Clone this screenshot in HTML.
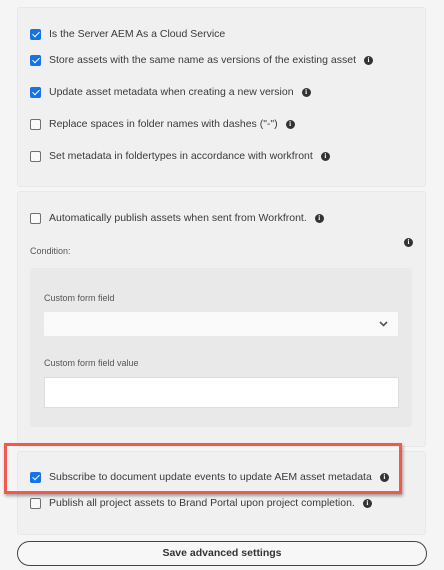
<!DOCTYPE html>
<html><head><meta charset="utf-8"><style>
*{box-sizing:border-box;margin:0;padding:0}
body{width:444px;height:570px;background:#f5f5f5;font-family:"Liberation Sans",sans-serif;color:#3a3a3a;position:relative;overflow:hidden}
.p{position:absolute;left:17px;width:409px;background:#f0f0f0;border:1px solid #e8e8e8;border-radius:3px}
.row{position:absolute;left:30px;font-size:10.5px;white-space:nowrap;display:flex;align-items:center;height:14px}
.cb{width:11px;height:11px;border:1.5px solid #707070;border-radius:2px;background:#fafafa;margin-right:8px;flex:none}
.cb.on{background:#1473e6;border-color:#1473e6;position:relative}
.cb.on:after{content:"";position:absolute;left:2.5px;top:0.5px;width:3px;height:6px;border:solid #fff;border-width:0 1.8px 1.8px 0;transform:rotate(45deg)}
.i{display:inline-block;width:9px;height:9px;border-radius:50%;background:#333;color:#fff;font-size:7px;font-weight:bold;text-align:center;line-height:9px;margin-left:8px;font-family:"Liberation Serif",serif}
.lbl{position:absolute;font-size:9px;color:#555}
</style></head><body>
<div class="p" style="top:7px;height:180px"></div>
<div class="row" style="top:27px"><span class="cb on"></span>Is the Server AEM As a Cloud Service</div>
<div class="row" style="top:53px"><span class="cb on"></span>Store assets with the same name as versions of the existing asset<span class="i">i</span></div>
<div class="row" style="top:85px"><span class="cb on"></span>Update asset metadata when creating a new version<span class="i">i</span></div>
<div class="row" style="top:117px"><span class="cb"></span>Replace spaces in folder names with dashes ("-")<span class="i">i</span></div>
<div class="row" style="top:149px"><span class="cb"></span>Set metadata in foldertypes in accordance with workfront<span class="i">i</span></div>

<div class="p" style="top:191px;height:256px"></div>
<div class="row" style="top:211px"><span class="cb"></span>Automatically publish assets when sent from Workfront.<span class="i">i</span></div>
<span class="i" style="position:absolute;left:396px;top:238px">i</span>
<div class="lbl" style="left:30px;top:246px">Condition:</div>
<div style="position:absolute;left:30px;top:268px;width:382px;height:159px;background:#e9e9e9;border-radius:3px"></div>
<div class="lbl" style="left:44px;top:293px">Custom form field</div>
<div style="position:absolute;left:44px;top:312px;width:354px;height:24px;background:#fafafa;border-radius:2px">
<svg style="position:absolute;right:10px;top:9px" width="9" height="6" viewBox="0 0 9 6"><path d="M1 1l3.5 3.5L8 1" stroke="#555" stroke-width="1.6" fill="none"/></svg></div>
<div class="lbl" style="left:44px;top:358px">Custom form field value</div>
<div style="position:absolute;left:44px;top:377px;width:355px;height:31px;background:#fff;border:1px solid #ddd"></div>

<div class="p" style="top:451px;height:84px"></div>
<div class="row" style="top:470px"><span class="cb on"></span>Subscribe to document update events to update AEM asset metadata<span class="i">i</span></div>
<div class="row" style="top:496px"><span class="cb"></span>Publish all project assets to Brand Portal upon project completion.<span class="i">i</span></div>
<div style="position:absolute;left:4px;top:443px;width:398px;height:51px;border:3px solid #f2584b;box-shadow:1px 2px 3px rgba(0,0,0,.35)"></div>

<div style="position:absolute;left:17px;top:541px;width:410px;height:25px;border:1.5px solid #444;border-radius:13px;font-size:10.5px;font-weight:600;color:#333;text-align:center;line-height:22px;background:#f7f7f7">Save advanced settings</div>
</body></html>
